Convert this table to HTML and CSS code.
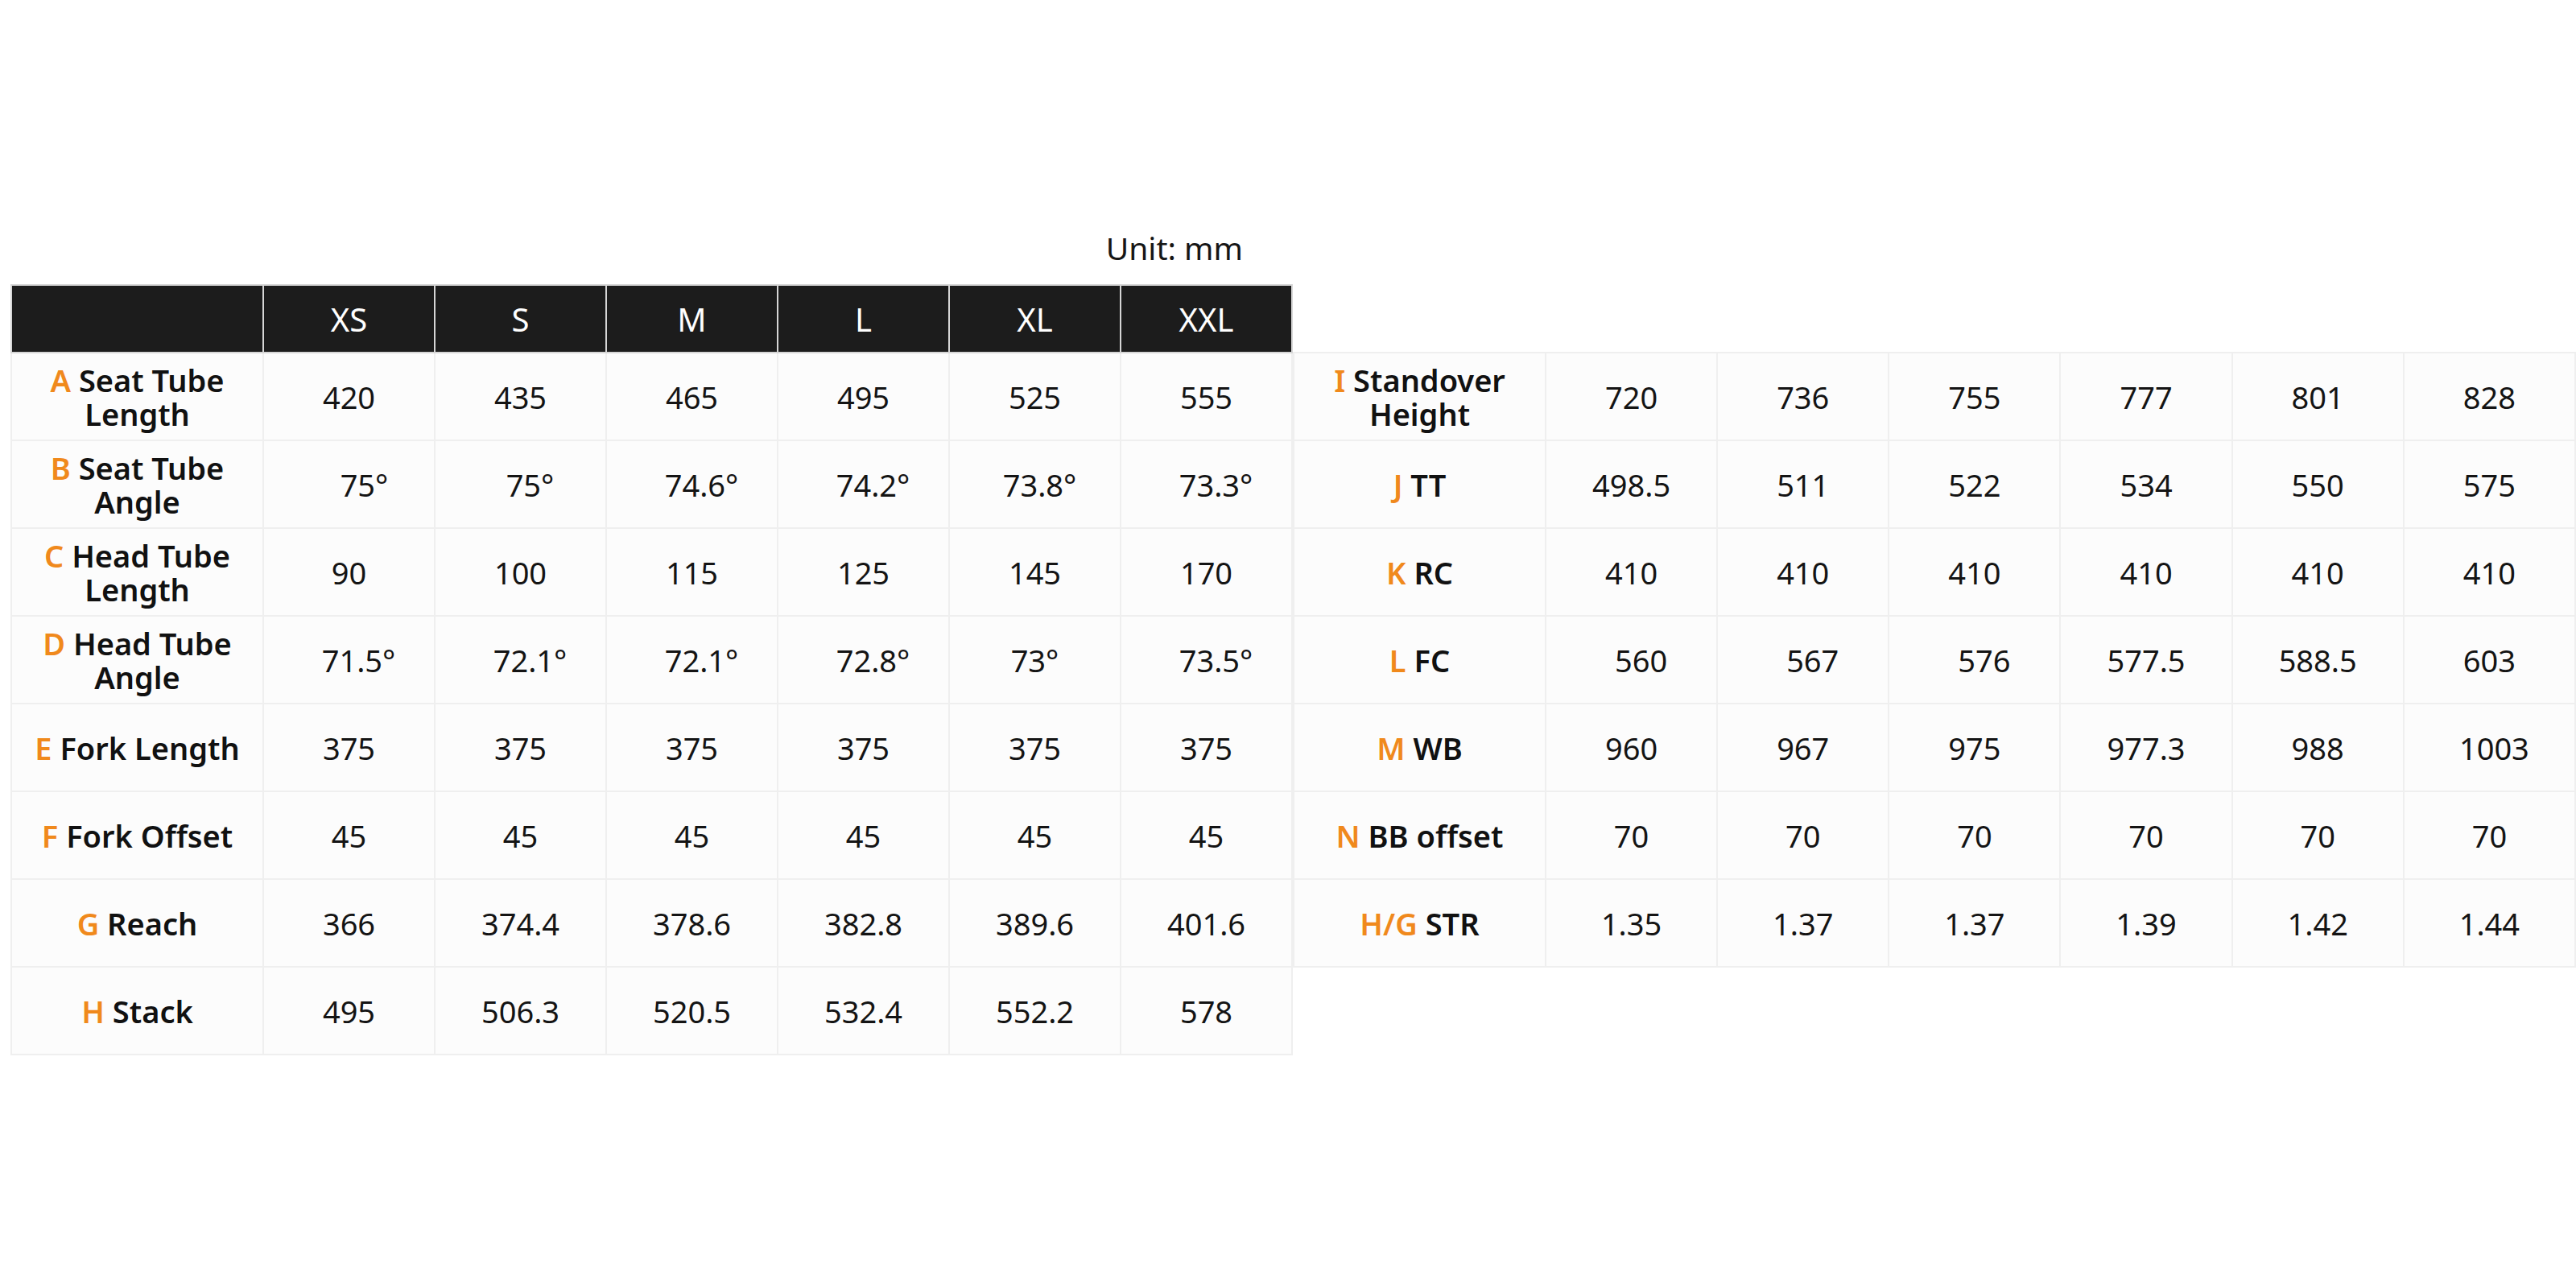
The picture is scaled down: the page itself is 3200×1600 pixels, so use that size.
FILE: index.html
```html
<!DOCTYPE html>
<html lang="en">
<head>
<meta charset="utf-8">
<title>Geometry</title>
<link rel="stylesheet" href="styles.css">
</head>
<body>
<div class="page">
  <div class="block">
    <div class="unit">Unit: mm</div>
    <table class="geo">
      <colgroup><col class="c-lbl"><col><col><col><col><col><col></colgroup>
      <thead>
        <tr><th></th><th>XS</th><th>S</th><th>M</th><th>L</th><th>XL</th><th>XXL</th></tr>
      </thead>
      <tbody>
        <tr><td class="lbl"><span class="k">A</span> Seat Tube<br>Length</td><td>420</td><td>435</td><td>465</td><td>495</td><td>525</td><td>555</td></tr>
        <tr><td class="lbl"><span class="k">B</span> Seat Tube<br>Angle</td><td class="ind2">75°</td><td class="ind">75°</td><td class="ind">74.6°</td><td class="ind">74.2°</td><td class="ind1">73.8°</td><td class="ind">73.3°</td></tr>
        <tr><td class="lbl"><span class="k">C</span> Head Tube<br>Length</td><td>90</td><td>100</td><td>115</td><td>125</td><td>145</td><td>170</td></tr>
        <tr><td class="lbl"><span class="k">D</span> Head Tube<br>Angle</td><td class="ind">71.5°</td><td class="ind">72.1°</td><td class="ind">72.1°</td><td class="ind">72.8°</td><td>73°</td><td class="ind">73.5°</td></tr>
        <tr><td class="lbl"><span class="k">E</span> Fork Length</td><td>375</td><td>375</td><td>375</td><td>375</td><td>375</td><td>375</td></tr>
        <tr><td class="lbl"><span class="k">F</span> Fork Offset</td><td>45</td><td>45</td><td>45</td><td>45</td><td>45</td><td>45</td></tr>
        <tr><td class="lbl"><span class="k">G</span> Reach</td><td>366</td><td>374.4</td><td>378.6</td><td>382.8</td><td>389.6</td><td>401.6</td></tr>
        <tr><td class="lbl"><span class="k">H</span> Stack</td><td>495</td><td>506.3</td><td>520.5</td><td>532.4</td><td>552.2</td><td>578</td></tr>
      </tbody>
    </table>
  </div>
  <div class="block block-right">
    <table class="geo">
      <colgroup><col class="c-lbl"><col><col><col><col><col><col></colgroup>
      <tbody>
        <tr><td class="lbl"><span class="k">I</span> Standover<br>Height</td><td>720</td><td>736</td><td>755</td><td>777</td><td>801</td><td>828</td></tr>
        <tr><td class="lbl"><span class="k">J</span> TT</td><td>498.5</td><td>511</td><td>522</td><td>534</td><td>550</td><td>575</td></tr>
        <tr><td class="lbl"><span class="k">K</span> RC</td><td>410</td><td>410</td><td>410</td><td>410</td><td>410</td><td>410</td></tr>
        <tr><td class="lbl"><span class="k">L</span> FC</td><td class="ind">560</td><td class="ind">567</td><td class="ind">576</td><td>577.5</td><td>588.5</td><td>603</td></tr>
        <tr><td class="lbl"><span class="k">M</span> WB</td><td>960</td><td>967</td><td>975</td><td>977.3</td><td>988</td><td class="ind1">1003</td></tr>
        <tr><td class="lbl"><span class="k">N</span> BB offset</td><td>70</td><td>70</td><td>70</td><td>70</td><td>70</td><td>70</td></tr>
        <tr><td class="lbl"><span class="k">H/G</span> STR</td><td>1.35</td><td>1.37</td><td>1.37</td><td>1.39</td><td>1.42</td><td>1.44</td></tr>
      </tbody>
    </table>
  </div>
</div>
</body>
</html>
```

FILE: styles.css
```css
html, body {
  margin: 0;
  padding: 0;
  background: #ffffff;
}

body {
  font-family: "Noto Sans", "Open Sans", "DejaVu Sans", sans-serif;
  color: #141414;
}

.page {
  display: flex;
  align-items: flex-start;
  padding: 285px 0 0 13px;
}

.block {
  width: 1593px;
  flex: none;
}

.block-right {
  margin-top: 152px;
  width: 1594px;
}

.unit {
  text-align: right;
  font-size: 39px;
  line-height: 46px;
  padding-right: 62px;
  margin-bottom: 22px;
  color: #161616;
}

.geo {
  width: 100%;
  border-collapse: collapse;
  table-layout: fixed;
}

.geo .c-lbl {
  width: 313px;
}

.geo th,
.geo td {
  padding: 0;
  text-align: center;
  vertical-align: middle;
}

.geo thead th {
  background: #1c1c1c;
  color: #ffffff;
  font-weight: 400;
  font-size: 40px;
  height: 82px;
  border: 2px solid #d6d6d6;
}

.geo tbody td {
  height: 107px;
  background: #fcfcfc;
  border: 2px solid #efefef;
  font-size: 38px;
  line-height: 42px;
  color: #141414;
}

.geo tbody td.lbl {
  font-weight: 600;
  color: #111111;
}

.k {
  color: #f0891c;
}

.geo tbody td.ind {
  padding-left: 24px;
}

.geo tbody td.ind1 {
  padding-left: 12px;
}

.geo tbody td.ind2 {
  padding-left: 38px;
}
```
